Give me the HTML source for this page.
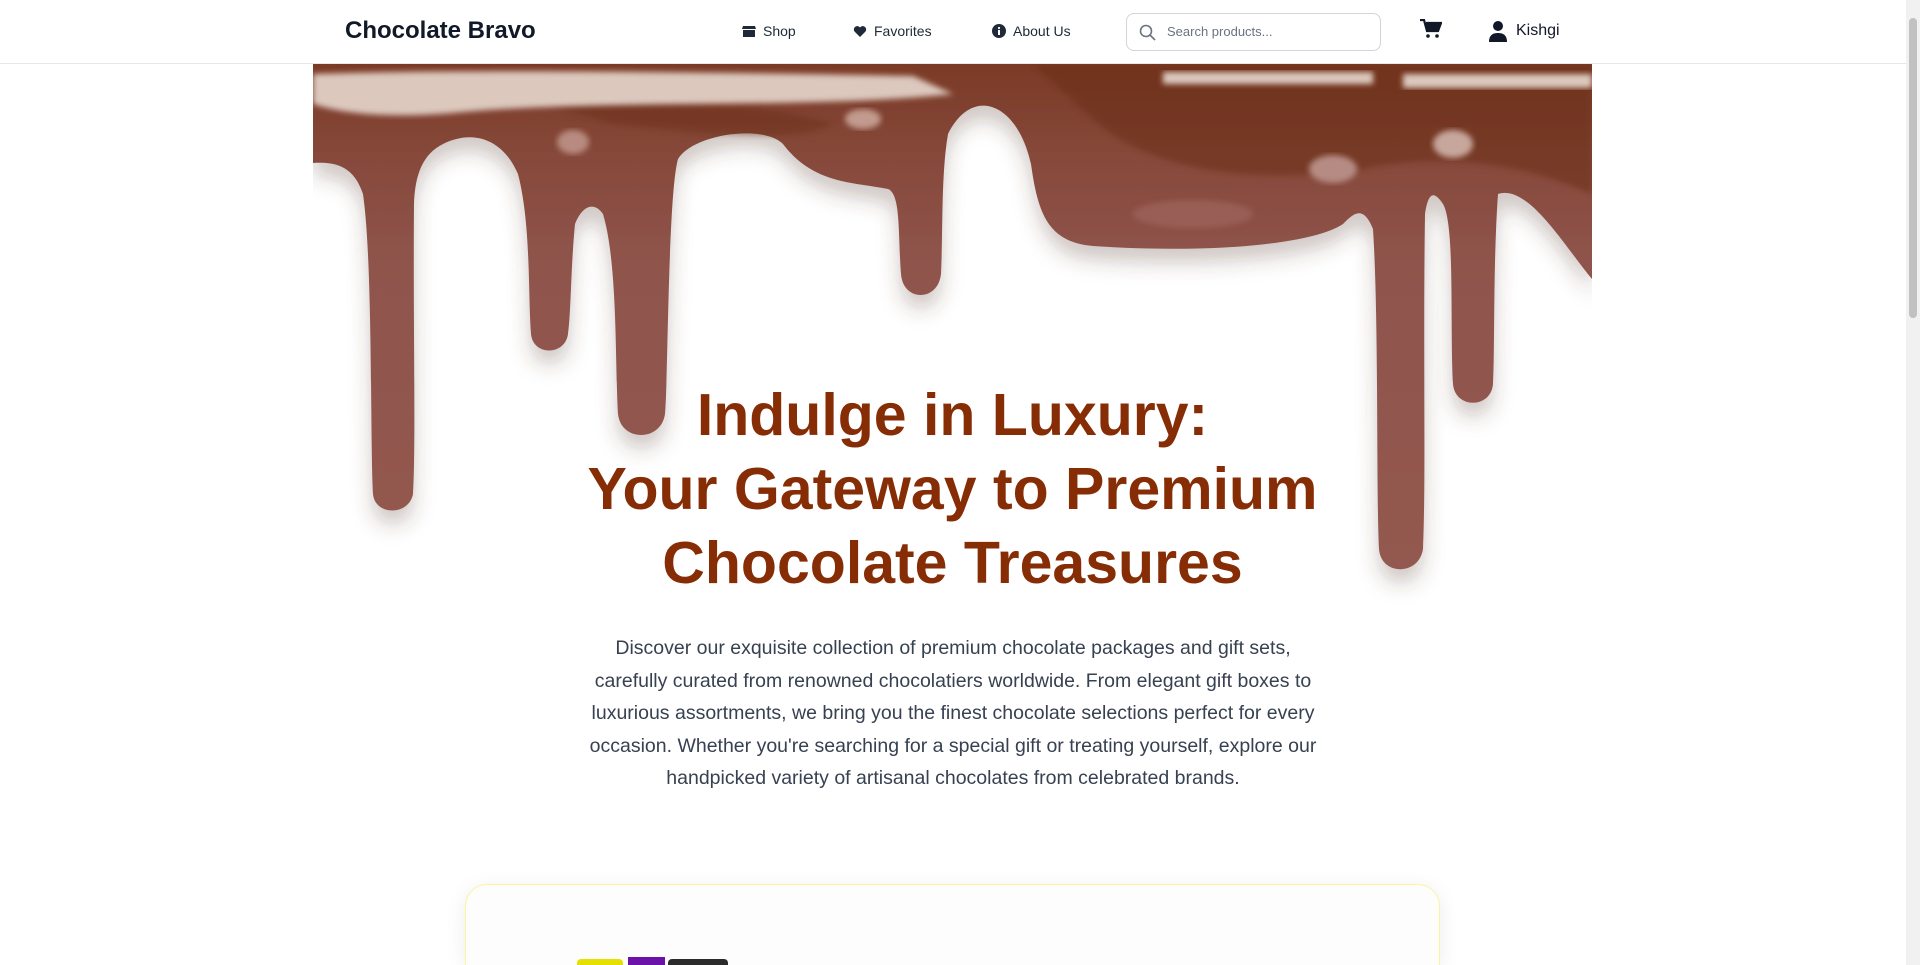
<!DOCTYPE html>
<html><head><meta charset="utf-8"><style>
*{margin:0;padding:0;box-sizing:border-box}
html,body{width:1920px;height:965px;overflow:hidden;background:#fff;font-family:"Liberation Sans",sans-serif;position:relative}
.nav{position:absolute;left:0;top:0;width:1906px;height:64px;border-bottom:1px solid #e5e7eb;background:#fff}
.logo{position:absolute;left:345px;top:17px;font-size:24px;font-weight:bold;color:#111827}
.nl{position:absolute;top:23px;font-size:14px;color:#1f2937;display:flex;align-items:center;gap:7px}
.search{position:absolute;left:1126px;top:13px;width:255px;height:38px;border:1px solid #d1d5db;border-radius:8px}
.search span{position:absolute;left:40px;top:10px;font-size:13px;color:#6b7280}
.sb{position:absolute;right:0;top:0;width:14px;height:965px;background:#f1f1f1}
.sb div{position:absolute;left:3px;top:18px;width:8px;height:300px;background:#c1c1c1;border-radius:4px}
h1{position:absolute;left:313px;width:1279px;top:378px;text-align:center;font-size:59px;line-height:74px;color:#862d06;font-weight:bold}
p.d{position:absolute;left:520px;width:866px;top:632px;text-align:center;font-size:19.5px;line-height:32.5px;color:#374151}
.card{position:absolute;left:465px;top:884px;width:975px;height:81px;border:1px solid #fdf3a3;border-bottom:none;border-radius:22px 22px 0 0;background:#fdfdfd;box-shadow:0 4px 20px rgba(0,0,0,.08)}
</style></head><body>
<div class="nav">
<div class="logo">Chocolate Bravo</div>
<div class="nl" style="left:742px"><svg width="14" height="13" viewBox="0 0 14 13"><path d="M1 1h12l1 3H0z M1 5h12v7H1z" fill="#1f2937"/></svg>Shop</div>
<div class="nl" style="left:853px"><svg width="14" height="13" viewBox="0 0 14 13"><path d="M7 12L1.5 6.5A3.3 3.3 0 0 1 7 2.5a3.3 3.3 0 0 1 5.5 4z" fill="#1f2937"/></svg>Favorites</div>
<div class="nl" style="left:992px"><svg width="14" height="14" viewBox="0 0 14 14"><circle cx="7" cy="7" r="7" fill="#1f2937"/><rect x="6" y="6" width="2" height="5" fill="#fff"/><circle cx="7" cy="4" r="1.1" fill="#fff"/></svg>About Us</div>
<div class="search"><svg style="position:absolute;left:12px;top:10px" width="17" height="17" viewBox="0 0 17 17"><circle cx="7" cy="7" r="5.5" stroke="#6b7280" stroke-width="1.6" fill="none"/><path d="M11 11l5 5" stroke="#6b7280" stroke-width="1.6"/></svg><span>Search products...</span></div>
<svg style="position:absolute;left:1420px;top:19px" width="22" height="20" viewBox="0 0 22 20"><path d="M0 1h4l3 11h11l3-8H6" fill="none" stroke="#111827" stroke-width="2.2"/><path d="M5 4h16l-3 8H7z" fill="#111827"/><circle cx="8" cy="17" r="1.8" fill="#111827"/><circle cx="17" cy="17" r="1.8" fill="#111827"/></svg>
<svg style="position:absolute;left:1489px;top:21px" width="18" height="21" viewBox="0 0 18 21"><circle cx="9" cy="5" r="5" fill="#111827"/><path d="M0 21c0-7 4-9 9-9s9 2 9 9z" fill="#111827"/></svg>
<div class="nl" style="left:1516px;top:22px;font-size:16px;color:#111827">Kishgi</div>
</div>
<svg style="position:absolute;left:313px;top:64px" width="1279" height="600" viewBox="0 0 1279 600">
<defs>
<linearGradient id="g" x1="0" y1="0" x2="0" y2="1"><stop offset="0" stop-color="#7a3a26"/><stop offset=".2" stop-color="#874a3c"/><stop offset=".4" stop-color="#8f544c"/><stop offset="1" stop-color="#93594f"/></linearGradient>
<filter id="s" x="-10%" y="-10%" width="120%" height="130%"><feDropShadow dx="0" dy="14" stdDeviation="10" flood-color="#5a3b30" flood-opacity=".28"/></filter>
<filter id="b"><feGaussianBlur stdDeviation="3"/></filter>
</defs>
<path filter="url(#s)" fill="url(#g)" d="M0,0 H1279 V215 C1250,180 1215,120 1185,130 C1180,200 1182,290 1180,320 C1178,345 1142,345 1140,320 C1137,260 1142,160 1130,140 C1120,125 1115,130 1112,150 C1110,280 1113,420 1110,485 C1106,512 1068,512 1066,485 C1063,420 1066,260 1060,165 C1050,140 1040,150 1030,160 C1000,180 900,190 780,182 C735,178 725,150 718,100 C705,40 660,20 635,70 C628,110 630,170 628,210 C625,238 590,238 588,210 C585,170 588,130 575,125 C540,118 500,120 470,80 C450,60 380,70 365,95 C355,130 355,320 352,350 C348,378 308,378 305,350 C302,300 305,200 290,150 C282,138 270,140 262,160 C258,200 258,250 255,270 C252,292 220,292 218,270 C215,230 218,160 205,110 C190,75 160,65 130,80 C110,90 102,110 101,140 C100,250 103,380 100,430 C96,452 62,452 60,430 C57,370 60,200 50,130 C40,100 20,98 0,99 Z"/>
<path d="M720 0 H1279 V130 C1200,95 1120,90 1050,105 C950,120 840,110 780,55 Z" fill="#6a2d17" opacity=".55" filter="url(#b)"/>
<path d="M200 30 C300 40 420 30 520 60 C480 80 400 70 300 60 Z" fill="#6a2d17" opacity=".45" filter="url(#b)"/>
<path d="M0 10 C150 5 400 8 600 12 L640 30 C500 45 300 35 150 48 C80 55 30 50 0 40 Z" fill="#dcc8bd" filter="url(#b)"/>
<path d="M850 8 H1060 V20 H850 Z M1090 10 H1279 V24 H1090Z" fill="#dcc8bd" filter="url(#b)"/>
<ellipse cx="550" cy="55" rx="18" ry="10" fill="#c29a8e" filter="url(#b)"/>
<ellipse cx="260" cy="78" rx="16" ry="12" fill="#b88a80" filter="url(#b)"/>
<ellipse cx="1020" cy="105" rx="24" ry="14" fill="#b58b83" filter="url(#b)"/>
<ellipse cx="1140" cy="80" rx="20" ry="14" fill="#c7a69c" filter="url(#b)"/>
<ellipse cx="880" cy="150" rx="60" ry="14" fill="#a36b62" opacity=".6" filter="url(#b)"/>
</svg>
<h1>Indulge in Luxury:<br>Your Gateway to Premium<br>Chocolate Treasures</h1>
<p class="d">Discover our exquisite collection of premium chocolate packages and gift sets,<br>carefully curated from renowned chocolatiers worldwide. From elegant gift boxes to<br>luxurious assortments, we bring you the finest chocolate selections perfect for every<br>occasion. Whether you're searching for a special gift or treating yourself, explore our<br>handpicked variety of artisanal chocolates from celebrated brands.</p>
<div class="card"></div>
<div style="position:absolute;left:577px;top:959px;width:46px;height:6px;background:#e6e000;border-radius:4px 4px 0 0"></div>
<div style="position:absolute;left:628px;top:957px;width:37px;height:8px;background:#6b12a8"></div>
<div style="position:absolute;left:668px;top:959px;width:60px;height:6px;background:#2b2b2b;border-radius:4px 4px 0 0"></div>
<div class="sb"><div></div></div>
</body></html>
